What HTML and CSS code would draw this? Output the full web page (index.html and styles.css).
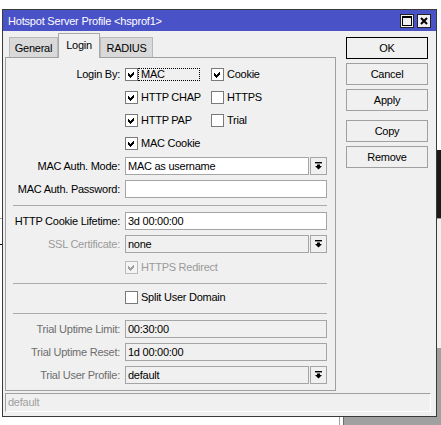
FILE: index.html
```html
<!DOCTYPE html>
<html>
<head>
<meta charset="utf-8">
<link rel="stylesheet" href="styles.css">
</head>
<body>
<div class="bg-dark"></div>
<div class="bg-light"></div>
<div class="bg-line"></div>
<div class="bg-gray"></div>
<div class="bg-l1"></div>
<div class="bg-l2"></div>

<div class="window">
  <div class="titlebar">
    <span class="title">Hotspot Server Profile &lt;hsprof1&gt;</span>
    <div class="tb-btns">
      <span class="tb-btn"><svg width="10" height="10" viewBox="0 0 10 10"><rect x="0.5" y="0.5" width="9" height="9" fill="none" stroke="#000"/><rect x="0" y="0" width="10" height="2" fill="#000"/></svg></span>
      <span class="tb-btn"><svg width="8" height="8" viewBox="0 0 8 8"><path d="M1 1 L7 7 M7 1 L1 7" stroke="#000" stroke-width="2"/></svg></span>
    </div>
  </div>
  <div class="content">
    <div class="main">
      <div class="left">
        <div class="tabs">
          <div class="tab t-general">General</div>
          <div class="tab active t-login">Login</div>
          <div class="tab t-radius">RADIUS</div>
        </div>
        <div class="panel">
          <div class="row">
            <div class="lbl">Login By:</div>
            <div class="cbs">
              <div class="cb c1"><span class="box"><svg class="chk" width="7" height="7" viewBox="0 0 7 7"><polygon points="0,2 2,4 6,0 6,3 2,7 0,5"/></svg></span><span class="t focus">MAC</span></div>
              <div class="cb"><span class="box"><svg class="chk" width="7" height="7" viewBox="0 0 7 7"><polygon points="0,2 2,4 6,0 6,3 2,7 0,5"/></svg></span><span class="t">Cookie</span></div>
            </div>
          </div>
          <div class="row">
            <div class="lbl"></div>
            <div class="cbs">
              <div class="cb c1"><span class="box"><svg class="chk" width="7" height="7" viewBox="0 0 7 7"><polygon points="0,2 2,4 6,0 6,3 2,7 0,5"/></svg></span><span class="t">HTTP CHAP</span></div>
              <div class="cb"><span class="box"></span><span class="t">HTTPS</span></div>
            </div>
          </div>
          <div class="row">
            <div class="lbl"></div>
            <div class="cbs">
              <div class="cb c1"><span class="box"><svg class="chk" width="7" height="7" viewBox="0 0 7 7"><polygon points="0,2 2,4 6,0 6,3 2,7 0,5"/></svg></span><span class="t">HTTP PAP</span></div>
              <div class="cb"><span class="box"></span><span class="t">Trial</span></div>
            </div>
          </div>
          <div class="row">
            <div class="lbl"></div>
            <div class="cbs">
              <div class="cb c1"><span class="box"><svg class="chk" width="7" height="7" viewBox="0 0 7 7"><polygon points="0,2 2,4 6,0 6,3 2,7 0,5"/></svg></span><span class="t">MAC Cookie</span></div>
            </div>
          </div>
          <div class="row">
            <div class="lbl">MAC Auth. Mode:</div>
            <div class="combo"><div class="field">MAC as username</div><div class="dd"><svg width="7" height="8" viewBox="0 0 7 8"><rect x="0" y="0" width="7" height="1.4"/><polygon points="2,2.4 5,2.4 5,4 7,4 3.5,7.6 0,4 2,4"/></svg></div></div>
          </div>
          <div class="row">
            <div class="lbl">MAC Auth. Password:</div>
            <div class="field wide"></div>
          </div>
          <div class="sep"></div>
          <div class="row">
            <div class="lbl">HTTP Cookie Lifetime:</div>
            <div class="field wide">3d 00:00:00</div>
          </div>
          <div class="row">
            <div class="lbl dis-light">SSL Certificate:</div>
            <div class="combo"><div class="field disabled">none</div><div class="dd"><svg width="7" height="8" viewBox="0 0 7 8"><rect x="0" y="0" width="7" height="1.4"/><polygon points="2,2.4 5,2.4 5,4 7,4 3.5,7.6 0,4 2,4"/></svg></div></div>
          </div>
          <div class="row">
            <div class="lbl"></div>
            <div class="cbs">
              <div class="cb"><span class="box dis"><svg class="chk" width="7" height="7" viewBox="0 0 7 7"><polygon points="0,2 2,4 6,0 6,3 2,7 0,5"/></svg></span><span class="t dis-light">HTTPS Redirect</span></div>
            </div>
          </div>
          <div class="sep"></div>
          <div class="row split">
            <div class="lbl"></div>
            <div class="cbs">
              <div class="cb"><span class="box"></span><span class="t">Split User Domain</span></div>
            </div>
          </div>
          <div class="sep"></div>
          <div class="row">
            <div class="lbl dis-dark">Trial Uptime Limit:</div>
            <div class="field wide disabled">00:30:00</div>
          </div>
          <div class="row">
            <div class="lbl dis-dark">Trial Uptime Reset:</div>
            <div class="field wide disabled">1d 00:00:00</div>
          </div>
          <div class="row">
            <div class="lbl dis-dark">Trial User Profile:</div>
            <div class="combo"><div class="field disabled">default</div><div class="dd"><svg width="7" height="8" viewBox="0 0 7 8"><rect x="0" y="0" width="7" height="1.4"/><polygon points="2,2.4 5,2.4 5,4 7,4 3.5,7.6 0,4 2,4"/></svg></div></div>
          </div>
        </div>
      </div>
      <div class="buttons">
        <div class="btn ok">OK</div>
        <div class="btn">Cancel</div>
        <div class="btn gap">Apply</div>
        <div class="btn">Copy</div>
        <div class="btn">Remove</div>
      </div>
    </div>
    <div class="status">default</div>
  </div>
</div>
</body>
</html>
```
FILE: styles.css
```css
* { box-sizing: border-box; }
html, body { margin: 0; padding: 0; }
body {
  width: 441px;
  height: 425px;
  overflow: hidden;
  background: #fff;
  position: relative;
  font-family: "Liberation Sans", Arial, sans-serif;
  font-size: 11px;
  letter-spacing: -0.25px;
  color: #000;
}

/* desktop behind the dialog */
.bg-dark { position: absolute; left: 437px; top: 150px; width: 4px; height: 68px; background: #1a1a1a; }
.bg-light { position: absolute; left: 437px; top: 218px; width: 4px; height: 130px; background: #f0f0f0; border-top: 1px solid #a0a0a0; }
.bg-line { position: absolute; left: 339px; top: 348px; width: 1px; height: 77px; background: #a0a0a0; }
.bg-gray { position: absolute; left: 343px; top: 348px; right: 0; bottom: 0; background: #a0a0a0; border-left: 1px solid #6a6a6a; }
.bg-l1 { position: absolute; left: 0; top: 218px; width: 2px; height: 1px; background: #a0a0a0; }
.bg-l2 { position: absolute; left: 0; top: 244px; width: 2px; height: 1px; background: #000; }

.window {
  position: absolute;
  left: 2px;
  top: 9px;
  width: 435px;
  height: 408px;
  border: 1px solid #3a3a3a;
  background: #f0f0f0;
  display: flex;
  flex-direction: column;
}

.titlebar {
  flex: none;
  height: 21px;
  background: #4a52c8;
  color: #fff;
  display: flex;
  align-items: center;
  padding: 0 5px 0 5px;
}
.title { flex: 1; letter-spacing: -0.2px; }
.tb-btns { display: flex; gap: 3px; }
.tb-btn {
  width: 14px;
  height: 14px;
  background: #f0f0f0;
  border: 1px solid #222;
  display: flex;
  align-items: center;
  justify-content: center;
}

.content {
  flex: 1;
  display: flex;
  flex-direction: column;
  padding: 2px 5px 3px 2px;
}
.main { display: flex; gap: 10px; }
.left { width: 331px; display: flex; flex-direction: column; }

.tabs {
  display: flex;
  align-items: flex-end;
  height: 24px;
  padding-left: 4px;
  position: relative;
  z-index: 1;
}
.tab {
  height: 20px;
  border: 1px solid #b9b9b9;
  border-bottom: none;
  background: #d9d9d9;
  display: flex;
  align-items: center;
  justify-content: center;
}
.tab.active {
  height: 25px;
  margin-bottom: -1px;
  background: #f0f0f0;
  padding-bottom: 2px;
  border-color: #a8a8a8;
}
.t-general { width: 49px; }
.t-login { width: 42px; }
.t-radius { width: 53px; }

.panel {
  height: 334px;
  border: 1px solid #a0a0a0;
  padding: 7px 7px 0 0;
  display: flex;
  flex-direction: column;
}

.row {
  flex: none;
  display: flex;
  align-items: center;
  height: 18px;
  margin-bottom: 5px;
}
.row.split { margin-top: -2px; }
.lbl {
  flex: none;
  width: 114px;
  margin-right: 5px;
  text-align: right;
  white-space: nowrap;
}
.dis-light { color: #9a9a9a; }
.dis-dark { color: #6d6d6d; }

.field {
  height: 18px;
  border: 1px solid #a5a5a5;
  background: #fff;
  padding: 0 2px;
  line-height: 16px;
  white-space: nowrap;
  overflow: hidden;
}
.field.wide { width: 202px; }
.field.disabled { background: #f0f0f0; }
.combo { display: flex; gap: 1px; width: 202px; }
.combo .field { flex: 1; }
.dd {
  flex: none;
  width: 17px;
  height: 18px;
  border: 1px solid #a5a5a5;
  background: #f0f0f0;
  display: flex;
  align-items: center;
  justify-content: center;
}
.dd svg { fill: #000; }

.sep {
  flex: none;
  height: 1px;
  width: 314px;
  background: #ababab;
  margin: 2px 0 6px 7px;
}

.cbs { display: flex; }
.cb { display: flex; align-items: center; height: 18px; }
.cb.c1 { width: 86px; }
.box {
  flex: none;
  width: 13px;
  height: 13px;
  border: 1px solid #7a7a7a;
  background: #fff;
  display: flex;
  align-items: center;
  justify-content: center;
}
.chk { fill: #000; shape-rendering: crispEdges; }
.box.dis { border-color: #bcbcbc; background: #f4f4f4; }
.box.dis .chk { fill: #a0a0a0; }
.cb .t { padding-left: 3px; white-space: nowrap; }
.cb .t.focus {
  width: 62px;
  height: 13px;
  line-height: 11px;
  border: 1px dotted #000;
  padding-left: 2px;
}

.buttons {
  flex: none;
  width: 82px;
  display: flex;
  flex-direction: column;
  padding-top: 4px;
}
.btn {
  height: 22px;
  border: 1px solid #a0a0a0;
  background: #f0f0f0;
  display: flex;
  align-items: center;
  justify-content: center;
  margin-bottom: 4px;
}
.btn.ok { border-color: #000; }
.btn.gap { margin-bottom: 9px; }

.status {
  margin-top: 2px;
  height: 19px;
  border: 1px solid;
  border-color: #a0a0a0 #fdfdfd #fdfdfd #a0a0a0;
  color: #a0a0a0;
  padding-left: 2px;
  line-height: 17px;
}
```
